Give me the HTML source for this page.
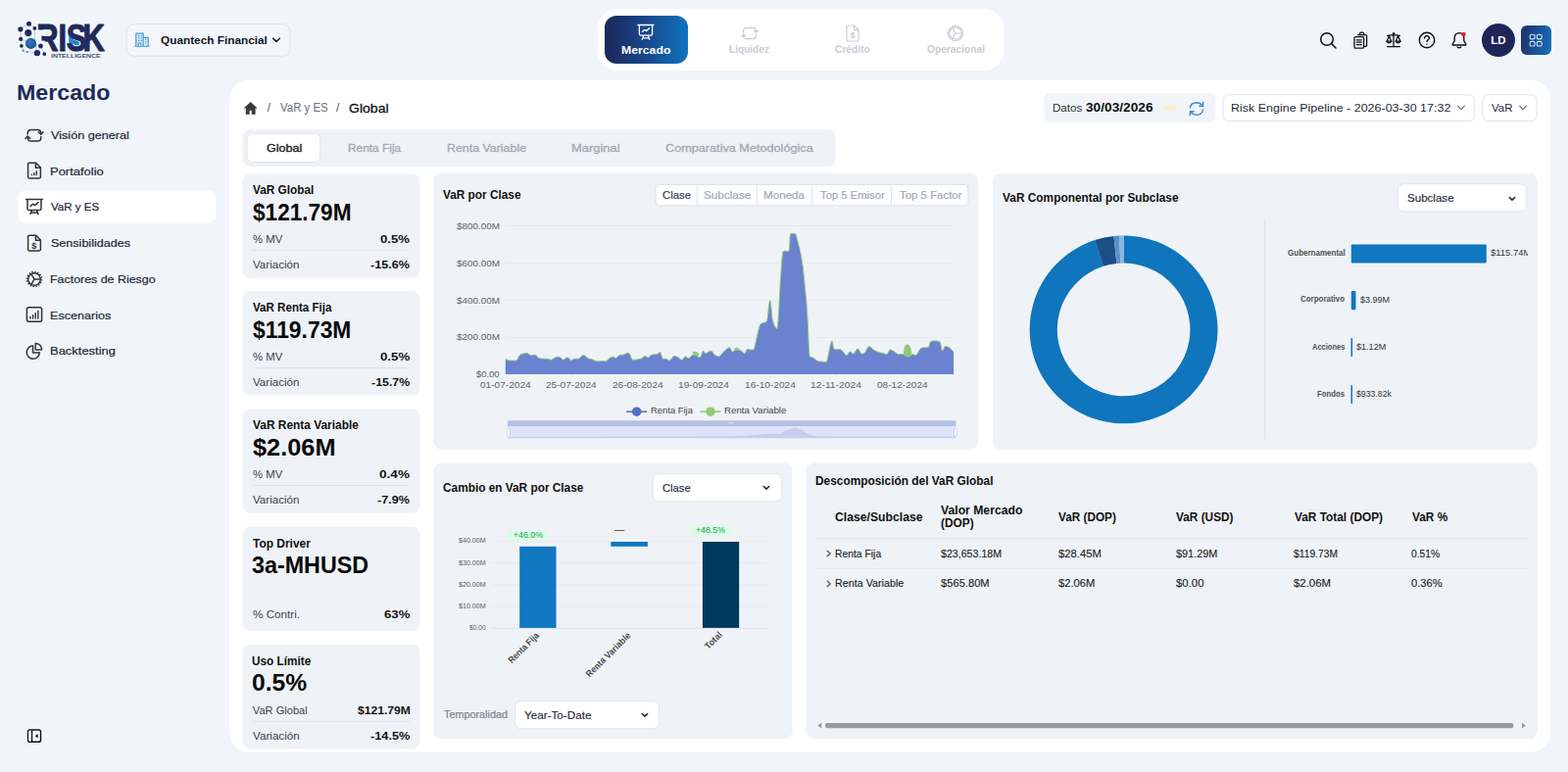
<!DOCTYPE html>
<html lang="es">
<head>
<meta charset="utf-8">
<title>Risk Intelligence - Mercado - VaR y ES</title>
<style>
*{box-sizing:border-box;margin:0;padding:0}
html,body{width:1600px;height:788px;overflow:hidden}
body{background:#f1f5f9;font-family:"Liberation Sans",sans-serif;color:#0f172a;position:relative}
.a{position:absolute}
.t{position:absolute;white-space:nowrap;line-height:1}
svg{position:absolute;overflow:visible}
.card{position:absolute;background:#eff2f7;border-radius:8px}
.sel{position:absolute;background:#fff;border:1px solid #eef0f4;border-radius:6px;box-shadow:0 1px 1.5px rgba(16,24,40,.06)}
.ico{fill:none;stroke:#333;stroke-width:1.5;stroke-linecap:round;stroke-linejoin:round}
.kd{position:absolute;height:1px;background:#e1e5eb}
</style>
</head>
<body>
<svg class="a" style="left:16px;top:19px" width="94" height="42" viewBox="16 19 94 42">
  <defs>
    <radialGradient id="lg1" cx="40%" cy="35%" r="75%"><stop offset="0" stop-color="#3577bd"/><stop offset="1" stop-color="#1d4c90"/></radialGradient>
  </defs>
  <text y="51.8" font-family="Liberation Sans, sans-serif" font-weight="700" font-size="39.6" fill="#1f2a5c" stroke="#1f2a5c" stroke-width="1.1" stroke-linejoin="round" transform="scale(0.78,1)" x="47.8 76.3 86.8 108.3">RISK</text>
  <path d="M36.5 30.6 H45 V36.6 H42.4 V41.4 H45.6 V54 H36.5 Z" fill="#f1f5f9"/>
  <path d="M70.2 35.2 Q72.6 40.2 77.4 41.2 Q81.8 42.2 81.2 45 Q79.8 47.2 76.2 45.8 Q74.2 43.8 70.2 44.4 Z" fill="#2487c8"/>
  <g stroke="#8a99c4" stroke-width=".5" fill="none">
    <path d="M20.9 29.8 L29.5 24.2 L35.4 28.9 L35.4 42 L37.9 54.1 L23.6 51.8 L21.2 39.9 Z"/>
    <path d="M28.8 33.5 L31.5 44.4 L41.5 47 L45.3 55.1 M21.2 39.9 L31.5 44.4 M41.5 47 L37.9 54.1"/>
  </g>
  <g fill="#1f2a5c">
    <circle cx="29.5" cy="24.2" r="2.5"/>
    <circle cx="20.9" cy="29.8" r="2.6"/>
    <circle cx="35.4" cy="28.9" r="1.9"/>
    <circle cx="28.8" cy="33.5" r="3.5"/>
    <circle cx="21.2" cy="39.9" r="2.1"/>
    <circle cx="21.9" cy="46.8" r="1.9"/>
    <circle cx="41.5" cy="47" r="2.4"/>
    <circle cx="37.9" cy="54.1" r="3.2"/>
    <circle cx="45.3" cy="55.1" r="1.9"/>
  </g>
  <circle cx="23.6" cy="51.8" r="1.1" fill="#4a8fd0"/>
  <circle cx="27.6" cy="53.1" r="1.1" fill="#4a8fd0"/>
  <circle cx="31.5" cy="44.4" r="5.6" fill="url(#lg1)"/>
  <text x="52" y="58.7" font-family="Liberation Sans, sans-serif" font-weight="700" font-size="4.6" fill="#4a5376" textLength="50.6" lengthAdjust="spacingAndGlyphs">INTELLIGENCE</text>
</svg>
<svg style="left:126px;top:22px" width="173" height="38" viewBox="126 22 173 38"><rect x="129.1" y="24.6" width="166.8" height="32.6" rx="7.5" fill="#f3f6fa" stroke="#dfe4ea" stroke-width="1"/></svg>
<svg style="left:135.5px;top:32px" width="18" height="18" viewBox="0 0 18 18">
  <path d="M1.5 15.2 H16.5" stroke="#4b9bd6" stroke-width="1.2" fill="none"/>
  <path d="M2.8 15 V2.2 H10.2 V15" stroke="#4b9bd6" stroke-width="1.2" fill="#d7e9f8"/>
  <path d="M10.2 6.3 H15.2 V15" stroke="#4b9bd6" stroke-width="1.2" fill="#d7e9f8"/>
  <path d="M5 4.6h1.2M7.6 4.6h1.2M5 7h1.2M7.6 7h1.2M5 9.4h1.2M7.6 9.4h1.2M12.2 8.5h1M12.2 10.8h1M12.2 13h1" stroke="#3b8fd0" stroke-width="1.2" fill="none"/>
  <path d="M5.2 15 V12.4 Q6.5 11 7.8 12.4 V15" stroke="#3b8fd0" stroke-width="1.1" fill="#fff"/>
</svg>
<div class="t" style="left:163.59px;top:36px;font-size:11.5px;color:#111827;font-weight:700;transform:scaleX(1.0263);transform-origin:0 0;">Quantech Financial</div>
<svg style="left:277px;top:36px" width="10" height="10" viewBox="0 0 10 10"><path d="M1.6 3.2 L5 6.4 L8.4 3.2" fill="none" stroke="#111" stroke-width="1.5" stroke-linecap="round" stroke-linejoin="round"/></svg>
<svg style="left:608px;top:7px" width="419" height="67" viewBox="608 7 419 67"><rect x="610" y="9" width="414.3" height="63" rx="20" fill="#fff"/></svg>
<div class="a" style="left:616.7px;top:16px;width:85.2px;height:48.8px;background:linear-gradient(90deg,#1d2759 0%,#18488c 50%,#1074be 100%);border-radius:12px;"></div>
<svg style="left:650.3px;top:23.5px" width="18" height="18" viewBox="0 0 18 18" fill="none" stroke="#fff" stroke-width="1.3" stroke-linecap="round" stroke-linejoin="round">
  <path d="M1 1.5 H17"/><path d="M2.4 1.8 V10.6 Q2.4 12.2 4 12.2 H14 Q15.6 12.2 15.6 10.6 V1.8"/>
  <path d="M5.2 16.4 L6.6 12.6 M12.8 16.4 L11.4 12.6 M5.8 14.8 H12.2"/>
  <path d="M5.6 8.3 L7.8 6.3 L9.6 7.6 L12.6 4.8"/>
</svg>
<div class="t" style="left:634.22px;top:46px;font-size:11.8px;color:#fff;font-weight:700;transform:scaleX(1.0392);transform-origin:0 0;">Mercado</div>
<svg style="left:755.7px;top:25px" width="18" height="18" viewBox="0 0 18 18" fill="none" stroke="#c9cdd4" stroke-width="1.3" stroke-linecap="round" stroke-linejoin="round">
  <path d="M2.6 8.2 V6.6 Q2.6 3.4 5.8 3.4 H12.2 Q15.4 3.4 15.4 6.6 V7.6"/><path d="M13.4 6.2 L15.4 8 L17.2 6.2"/>
  <path d="M15.4 10.2 V11.4 Q15.4 14.6 12.2 14.6 H5.8 Q2.6 14.6 2.6 11.4 V10.6"/><path d="M.8 12 L2.6 10.2 L4.6 12"/>
</svg>
<div class="t" style="left:743.88px;top:45px;font-size:10.5px;color:#c9cdd4;font-weight:700;transform:scaleX(0.9614);transform-origin:0 0;">Liquidez</div>
<svg style="left:860.7px;top:25px" width="18" height="18" viewBox="0 0 18 18" fill="none" stroke="#c9cdd4" stroke-width="1.2" stroke-linecap="round" stroke-linejoin="round">
  <path d="M3 2.2 Q3 1 4.2 1 H10.6 L15 5.4 V15.8 Q15 17 13.8 17 H4.2 Q3 17 3 15.8 Z"/><path d="M10.4 1.2 V5.6 H14.8"/>
  <text x="9" y="14.2" text-anchor="middle" font-family="Liberation Sans, sans-serif" font-weight="700" font-size="8.5" fill="#c9cdd4" stroke="none">$</text>
</svg>
<div class="t" style="left:852.31px;top:45px;font-size:10.5px;color:#c9cdd4;font-weight:700;transform:scaleX(0.9734);transform-origin:0 0;">Crédito</div>
<svg style="left:966px;top:25px" width="18" height="18" viewBox="0 0 18 18" fill="none" stroke="#c9cdd4" stroke-width="1.2" stroke-linecap="round" stroke-linejoin="round">
  <circle cx="9" cy="9" r="6.2"/><circle cx="9" cy="9" r="7.6" stroke-dasharray="1.3 1.6" stroke-width="1.4"/>
  <path d="M9 9 L14.8 9 M9 9 L6 3.8 M9 9 L6 14.2"/>
</svg>
<div class="t" style="left:946.11px;top:45px;font-size:10.5px;color:#c9cdd4;font-weight:700;transform:scaleX(0.9731);transform-origin:0 0;">Operacional</div>
<svg style="left:1345px;top:31px" width="20" height="20" viewBox="0 0 20 20" fill="none" stroke="#111" stroke-width="1.5" stroke-linecap="round"><circle cx="9" cy="9" r="6.3"/><path d="M13.8 13.8 L18 18"/></svg>
<svg style="left:1379px;top:31px" width="20" height="20" viewBox="0 0 20 20" fill="none" stroke="#111" stroke-width="1.3" stroke-linejoin="round" stroke-linecap="round">
  <path d="M6.5 4.6 H14.4 Q15.6 4.6 15.6 5.8 V15.2 Q15.6 16.4 14.4 16.4 H13.2"/>
  <path d="M8.6 4.4 V3.2 Q8.6 2.2 9.6 2.2 H11.6 Q12.6 2.2 12.6 3.2 V4.4"/>
  <rect x="3" y="6.6" width="9.6" height="11.6" rx="1.2"/>
  <path d="M5.2 9.8 H10.4 M5.2 12.2 H10.4 M5.2 14.6 H10.4"/>
</svg>
<svg style="left:1412px;top:31px" width="20" height="20" viewBox="0 0 20 20" fill="none" stroke="#111" stroke-width="1.3" stroke-linejoin="round" stroke-linecap="round">
  <path d="M10 4.4 V16.2 M3.6 16.6 H16.4 M3.6 5.4 Q6.6 4.6 10 5 Q13.4 4.6 16.4 5.4"/>
  <circle cx="10" cy="3.4" r="1" fill="#111" stroke-width=".8"/>
  <path d="M5.4 5.6 L3.2 11 M5.4 5.6 L7.6 11 M14.6 5.6 L12.4 11 M14.6 5.6 L16.8 11"/>
  <path d="M2.8 11.2 H8 Q5.4 14.4 2.8 11.2 Z M12 11.2 H17.2 Q14.6 14.4 12 11.2 Z"/>
</svg>
<svg style="left:1445.5px;top:31px" width="20" height="20" viewBox="0 0 20 20" fill="none" stroke="#111" stroke-width="1.4" stroke-linecap="round"><circle cx="10" cy="10" r="7.7"/>
  <path d="M7.6 8 Q7.6 5.6 10 5.6 Q12.4 5.6 12.4 7.8 Q12.4 9.2 10.8 10 Q10 10.6 10 11.6"/><circle cx="10" cy="14.2" r=".7" fill="#111" stroke="none"/></svg>
<svg style="left:1479px;top:31px" width="20" height="20" viewBox="0 0 20 20" fill="none" stroke="#111" stroke-width="1.4" stroke-linecap="round" stroke-linejoin="round">
  <path d="M10 2.6 Q5.4 2.8 5.2 7.6 V10.6 L3.2 14 Q2.8 15 4 15 H16 Q17.2 15 16.8 14 L14.8 10.6 V7.6 Q14.6 2.8 10 2.6 Z"/>
  <path d="M8.2 17 Q10 18.6 11.8 17"/>
  <circle cx="14.4" cy="4" r="2.3" fill="#f01d2a" stroke="none"/>
</svg>
<svg style="left:1510px;top:22px" width="38" height="38" viewBox="1510 22 38 38"><rect x="1512" y="24" width="34" height="34" rx="17" fill="#1e2557"/></svg>
<div class="t" style="left:1521.25px;top:36px;font-size:11.5px;color:#fff;font-weight:700;">LD</div>
<div class="a" style="left:1552px;top:26px;width:30.5px;height:30px;background:linear-gradient(100deg,#1d3572 10%,#1670bc 100%);border-radius:6px;"></div>
<svg style="left:1559.2px;top:33px" width="16" height="16" viewBox="0 0 16 16" fill="none" stroke="#cfe3f6" stroke-width="1.1"><rect x="2.2" y="2.3" width="4.9" height="4.6" rx="1.3"/><rect x="9.3" y="2.3" width="4.9" height="4.6" rx="1.3"/><rect x="2.2" y="9.4" width="4.9" height="4.6" rx="1.3"/><rect x="9.3" y="9.4" width="4.9" height="4.6" rx="1.3"/></svg>
<div class="t" style="left:17.46px;top:84px;font-size:22.6px;color:#1e2a5a;font-weight:700;transform:scaleX(1.0276);transform-origin:0 0;">Mercado</div>
<svg style="left:16px;top:192px" width="207" height="38" viewBox="16 192 207 38"><rect x="18.5" y="194.5" width="202" height="33" rx="8" fill="#fff"/></svg>
<div class="t" style="left:52.31px;top:132px;font-size:11.7px;color:#1e293b;-webkit-text-stroke:0.22px #1e293b;transform:scaleX(1.0819);transform-origin:0 0;">Visión general</div>
<div class="t" style="left:51.20px;top:169px;font-size:11.7px;color:#1e293b;-webkit-text-stroke:0.22px #1e293b;transform:scaleX(1.1100);transform-origin:0 0;">Portafolio</div>
<div class="t" style="left:52.31px;top:205px;font-size:11.7px;color:#1e293b;-webkit-text-stroke:0.22px #1e293b;transform:scaleX(0.9884);transform-origin:0 0;">VaR y ES</div>
<div class="t" style="left:51.77px;top:242px;font-size:11.7px;color:#1e293b;-webkit-text-stroke:0.22px #1e293b;transform:scaleX(1.0736);transform-origin:0 0;">Sensibilidades</div>
<div class="t" style="left:51.25px;top:279px;font-size:11.7px;color:#1e293b;-webkit-text-stroke:0.22px #1e293b;transform:scaleX(1.0615);transform-origin:0 0;">Factores de Riesgo</div>
<div class="t" style="left:51.23px;top:316px;font-size:11.7px;color:#1e293b;-webkit-text-stroke:0.22px #1e293b;transform:scaleX(1.0775);transform-origin:0 0;">Escenarios</div>
<div class="t" style="left:51.20px;top:352px;font-size:11.7px;color:#1e293b;-webkit-text-stroke:0.22px #1e293b;transform:scaleX(1.1077);transform-origin:0 0;">Backtesting</div>
<svg style="left:25px;top:127.5px" width="20" height="20" viewBox="0 0 20 20" class="ico">
  <path d="M3.2 9 V8 Q3.2 4.4 6.8 4.4 H13.2 Q16.8 4.4 16.8 8 V8.6"/><path d="M14.4 6.8 L16.8 9.2 L19 6.8"/>
  <path d="M16.8 11.6 V12.4 Q16.8 16 13.2 16 H6.8 Q3.2 16 3.2 12.4 V11.8"/><path d="M1 13.4 L3.2 11 L5.6 13.4"/>
</svg>
<svg style="left:25px;top:164.4px" width="20" height="20" viewBox="0 0 20 20" class="ico">
  <path d="M3.6 3.6 Q3.6 2.2 5 2.2 H11.6 L16.4 7 V16.6 Q16.4 18 15 18 H5 Q3.6 18 3.6 16.6 Z"/><path d="M11.4 2.6 V7.2 H16"/>
  <path d="M7.4 14.6 V14.2 M9.8 14.6 V12.8 M12.2 14.6 V11" stroke-width="1.4"/>
</svg>
<svg style="left:25px;top:201.2px" width="20" height="20" viewBox="0 0 20 20" class="ico">
  <path d="M1.6 2.6 H18.4"/><path d="M3 3 V12 Q3 13.4 4.4 13.4 H15.6 Q17 13.4 17 12 V3"/>
  <path d="M6 17.6 L7.4 13.8 M14 17.6 L12.6 13.8 M6.6 16 H13.4"/>
  <path d="M6.2 9.4 L8.6 7.2 L10.6 8.6 L13.8 5.6"/>
</svg>
<svg style="left:25px;top:238px" width="20" height="20" viewBox="0 0 20 20" class="ico">
  <path d="M3.6 3.6 Q3.6 2.2 5 2.2 H11.6 L16.4 7 V16.6 Q16.4 18 15 18 H5 Q3.6 18 3.6 16.6 Z"/><path d="M11.4 2.6 V7.2 H16"/>
  <text x="9.8" y="15.6" text-anchor="middle" font-family="Liberation Sans, sans-serif" font-weight="700" font-size="9" fill="#333" stroke="none">$</text>
</svg>
<svg style="left:25px;top:274.5px" width="20" height="20" viewBox="0 0 20 20" class="ico">
  <circle cx="10" cy="10" r="6.3"/><circle cx="10" cy="10" r="7.5" stroke-dasharray="1.4 1.545" stroke-width="1.5" stroke-linecap="butt"/>
  <path d="M10 10 H16.2 M10 10 L6.9 4.6 M10 10 L6.9 15.4"/>
</svg>
<svg style="left:25px;top:311.3px" width="20" height="20" viewBox="0 0 20 20" class="ico">
  <rect x="2.4" y="2.8" width="15.2" height="14.4" rx="2"/>
  <path d="M6 14 V12.4 M8.6 14 V10.6 M11.2 14 V8.6 M13.8 14 V6.4" stroke-width="1.4"/>
</svg>
<svg style="left:25px;top:348px" width="20" height="20" viewBox="0 0 20 20" class="ico">
  <path d="M8.6 5 A6.6 6.6 0 1 0 15.4 12 H8.6 Z"/>
  <path d="M11.2 2.4 A6.4 6.4 0 0 1 17.6 9 H11.2 Z"/>
</svg>
<svg style="left:0;top:0" width="60" height="788" viewBox="0 0 60 788">
  <rect x="28.6" y="745" width="12.9" height="12.2" rx="1.8" fill="#fff" stroke="#111" stroke-width="1.5"/>
  <rect x="29.3" y="745.8" width="3" height="10.6" fill="#f1f5f9"/>
  <path d="M32.6 745 V757.2" stroke="#111" stroke-width="1.3"/>
  <path d="M35.9 751.2 L38.7 749 V753.4 Z" fill="#111"/>
</svg>
<svg style="left:232px;top:79px" width="1352" height="691" viewBox="232 79 1352 691"><rect x="234" y="81.5" width="1348" height="686.3" rx="20" fill="#fff"/></svg>
<svg style="left:248.1px;top:102.7px" width="15.4" height="15" viewBox="0 0 17 16"><path d="M8.5 1.2 L1.4 7.8 H3.4 V14.6 H7 V10.2 H10 V14.6 H13.6 V7.8 H15.6 Z" fill="#3a3a3a" stroke="#3a3a3a" stroke-width=".6" stroke-linejoin="round"/></svg>
<div class="t" style="left:272.80px;top:104px;font-size:12px;color:#555;">/</div>
<div class="t" style="left:285.60px;top:104px;font-size:12px;color:#6b7280;transform:scaleX(0.9525);transform-origin:0 0;">VaR y ES</div>
<div class="t" style="left:342.90px;top:104px;font-size:12px;color:#555;">/</div>
<div class="t" style="left:355.68px;top:104px;font-size:13.6px;color:#111;-webkit-text-stroke:0.3px #111;transform:scaleX(1.0320);transform-origin:0 0;">Global</div>
<svg style="left:1063px;top:93px" width="180" height="34" viewBox="1063 93 180 34"><rect x="1065.4" y="95.2" width="175.1" height="29.7" rx="6" fill="#f1f5f9"/></svg>
<div class="t" style="left:1074.49px;top:105px;font-size:11.5px;color:#333;transform:scaleX(1.0052);transform-origin:0 0;">Datos</div>
<div class="t" style="left:1108.11px;top:104px;font-size:12px;color:#111;font-weight:700;transform:scaleX(1.1412);transform-origin:0 0;">30/03/2026</div>
<svg style="left:1186px;top:106px" width="17" height="9" viewBox="1186 106 17 9"><rect x="1188" y="108" width="12.3" height="4.8" rx="2.4" fill="#fdf0c4"/></svg>
<svg style="left:1211.5px;top:101.5px" width="18" height="18" viewBox="0 0 18 18" fill="none" stroke="#3b8fd9" stroke-width="1.5" stroke-linecap="round" stroke-linejoin="round">
  <path d="M2.4 8 Q3.2 3 9 2.8 Q12.6 2.8 15.2 6"/><path d="M15.6 2.4 V6.2 H11.8"/>
  <path d="M15.6 10 Q14.8 15 9 15.2 Q5.4 15.2 2.8 12"/><path d="M2.4 15.6 V11.8 H6.2"/>
</svg>
<svg style="left:1245px;top:94px" width="263" height="32" viewBox="1245 94 263 32"><rect x="1247.9" y="96.8" width="256.8" height="26.7" rx="5.5" fill="#fff" stroke="#dfe3e9" stroke-width="1"/></svg>
<div class="t" style="left:1255.54px;top:105px;font-size:11.8px;color:#1f2937;transform:scaleX(1.0592);transform-origin:0 0;">Risk Engine Pipeline - 2026-03-30 17:32</div>
<svg style="left:1485.6px;top:105.3px" width="10" height="10" viewBox="0 0 10 10"><path d="M1.6 3.2 L5 6.6 L8.4 3.2" fill="none" stroke="#666" stroke-width="1.1" stroke-linecap="round" stroke-linejoin="round"/></svg>
<svg style="left:1510px;top:94px" width="61" height="32" viewBox="1510 94 61 32"><rect x="1512.9" y="96.8" width="55.2" height="26.7" rx="5.5" fill="#fff" stroke="#dfe3e9" stroke-width="1"/></svg>
<div class="t" style="left:1521.86px;top:105px;font-size:11.8px;color:#1f2937;transform:scaleX(0.9741);transform-origin:0 0;">VaR</div>
<svg style="left:1549.2px;top:105.3px" width="10" height="10" viewBox="0 0 10 10"><path d="M1.6 3.2 L5 6.6 L8.4 3.2" fill="none" stroke="#666" stroke-width="1.1" stroke-linecap="round" stroke-linejoin="round"/></svg>
<svg style="left:245px;top:130px" width="610" height="42" viewBox="245 130 610 42"><rect x="247.6" y="132.2" width="605.2" height="37.8" rx="8" fill="#eff2f7"/></svg>
<svg style="left:249px;top:133px" width="81" height="35" viewBox="249 133 81 35"><rect x="252" y="136.2" width="74.8" height="29.3" rx="5.5" fill="#fff" stroke="#e0e3e9" stroke-width="1"/></svg>
<div class="t" style="left:271.52px;top:146px;font-size:11.3px;color:#222;-webkit-text-stroke:0.35px #222;transform:scaleX(1.1127);transform-origin:0 0;">Global</div>
<div class="t" style="left:354.70px;top:146px;font-size:11.3px;color:#a2a8b5;-webkit-text-stroke:0.3px #a2a8b5;transform:scaleX(1.0515);transform-origin:0 0;">Renta Fija</div>
<div class="t" style="left:455.55px;top:146px;font-size:11.3px;color:#a2a8b5;-webkit-text-stroke:0.3px #a2a8b5;transform:scaleX(1.0966);transform-origin:0 0;">Renta Variable</div>
<div class="t" style="left:583.11px;top:146px;font-size:11.3px;color:#a2a8b5;-webkit-text-stroke:0.3px #a2a8b5;transform:scaleX(1.1446);transform-origin:0 0;">Marginal</div>
<div class="t" style="left:678.69px;top:146px;font-size:11.3px;color:#a2a8b5;-webkit-text-stroke:0.3px #a2a8b5;transform:scaleX(1.1216);transform-origin:0 0;">Comparativa Metodológica</div>
<svg style="left:245px;top:175px" width="186" height="111" viewBox="245 175 186 111"><rect x="247.4" y="177.2" width="181.1" height="106.4" rx="8" fill="#eff2f7"/></svg>
<div class="t" style="left:257.66px;top:188px;font-size:12.2px;color:#111;font-weight:700;transform:scaleX(0.9692);transform-origin:0 0;">VaR Global</div>
<div class="t" style="left:257.65px;top:206px;font-size:23px;color:#0a0a0a;font-weight:700;transform:scaleX(0.9821);transform-origin:0 0;">$121.79M</div>
<div class="t" style="left:257.59px;top:239px;font-size:11.1px;color:#3a4150;transform:scaleX(1.0207);transform-origin:0 0;">% MV</div>
<div class="t" style="left:388.03px;top:238px;font-size:11.6px;color:#111;font-weight:700;transform:scaleX(1.1379);transform-origin:0 0;">0.5%</div>
<div class="t" style="left:257.84px;top:265px;font-size:11.1px;color:#3a4150;transform:scaleX(1.0427);transform-origin:0 0;">Variación</div>
<div class="t" style="left:378.26px;top:264px;font-size:11.6px;color:#111;font-weight:700;transform:scaleX(1.0861);transform-origin:0 0;">-15.6%</div>
<div class="kd" style="left:257.5px;top:254.8px;width:160.5px"></div>
<svg style="left:245px;top:295px" width="186" height="111" viewBox="245 295 186 111"><rect x="247.4" y="297.3" width="181.1" height="106.4" rx="8" fill="#eff2f7"/></svg>
<div class="t" style="left:257.66px;top:308px;font-size:12.2px;color:#111;font-weight:700;transform:scaleX(0.9503);transform-origin:0 0;">VaR Renta Fija</div>
<div class="t" style="left:257.65px;top:326px;font-size:23px;color:#0a0a0a;font-weight:700;transform:scaleX(0.9935);transform-origin:0 0;">$119.73M</div>
<div class="t" style="left:257.59px;top:359px;font-size:11.1px;color:#3a4150;transform:scaleX(1.0207);transform-origin:0 0;">% MV</div>
<div class="t" style="left:387.93px;top:358px;font-size:11.6px;color:#111;font-weight:700;transform:scaleX(1.1417);transform-origin:0 0;">0.5%</div>
<div class="t" style="left:257.84px;top:385px;font-size:11.1px;color:#3a4150;transform:scaleX(1.0427);transform-origin:0 0;">Variación</div>
<div class="t" style="left:378.87px;top:384px;font-size:11.6px;color:#111;font-weight:700;transform:scaleX(1.0694);transform-origin:0 0;">-15.7%</div>
<div class="kd" style="left:257.5px;top:374.9px;width:160.5px"></div>
<svg style="left:245px;top:415px" width="186" height="111" viewBox="245 415 186 111"><rect x="247.4" y="417.3" width="181.1" height="106.4" rx="8" fill="#eff2f7"/></svg>
<div class="t" style="left:257.66px;top:428px;font-size:12.2px;color:#111;font-weight:700;transform:scaleX(0.9768);transform-origin:0 0;">VaR Renta Variable</div>
<div class="t" style="left:257.62px;top:446px;font-size:23px;color:#0a0a0a;font-weight:700;transform:scaleX(1.1013);transform-origin:0 0;">$2.06M</div>
<div class="t" style="left:257.59px;top:479px;font-size:11.1px;color:#3a4150;transform:scaleX(1.0207);transform-origin:0 0;">% MV</div>
<div class="t" style="left:387.11px;top:478px;font-size:11.6px;color:#111;font-weight:700;transform:scaleX(1.1728);transform-origin:0 0;">0.4%</div>
<div class="t" style="left:257.84px;top:505px;font-size:11.1px;color:#3a4150;transform:scaleX(1.0427);transform-origin:0 0;">Variación</div>
<div class="t" style="left:385.36px;top:504px;font-size:11.6px;color:#111;font-weight:700;transform:scaleX(1.0847);transform-origin:0 0;">-7.9%</div>
<div class="kd" style="left:257.5px;top:494.9px;width:160.5px"></div>
<svg style="left:245px;top:535px" width="186" height="111" viewBox="245 535 186 111"><rect x="247.4" y="537.6" width="181.1" height="106.4" rx="8" fill="#eff2f7"/></svg>
<div class="t" style="left:257.65px;top:549px;font-size:12.2px;color:#111;font-weight:700;transform:scaleX(0.9808);transform-origin:0 0;">Top Driver</div>
<div class="t" style="left:257.39px;top:566px;font-size:23px;color:#0a0a0a;font-weight:700;transform:scaleX(1.0138);transform-origin:0 0;">3a-MHUSD</div>
<div class="t" style="left:257.57px;top:622px;font-size:11.1px;color:#3a4150;transform:scaleX(1.0531);transform-origin:0 0;">% Contri.</div>
<div class="t" style="left:391.73px;top:621px;font-size:11.6px;color:#111;font-weight:700;transform:scaleX(1.1378);transform-origin:0 0;">63%</div>
<svg style="left:245px;top:655px" width="186" height="112" viewBox="245 655 186 112"><rect x="247.4" y="657.9" width="181.1" height="106.4" rx="8" fill="#eff2f7"/></svg>
<div class="t" style="left:257.17px;top:669px;font-size:12.2px;color:#111;font-weight:700;transform:scaleX(0.9672);transform-origin:0 0;">Uso Límite</div>
<div class="t" style="left:256.83px;top:686px;font-size:23px;color:#0a0a0a;font-weight:700;transform:scaleX(1.0719);transform-origin:0 0;">0.5%</div>
<div class="t" style="left:257.85px;top:720px;font-size:11.1px;color:#3a4150;">VaR Global</div>
<div class="t" style="left:364.94px;top:719px;font-size:11.6px;color:#111;font-weight:700;transform:scaleX(1.0436);transform-origin:0 0;">$121.79M</div>
<div class="t" style="left:257.84px;top:746px;font-size:11.1px;color:#3a4150;transform:scaleX(1.0517);transform-origin:0 0;">Variación</div>
<div class="t" style="left:377.75px;top:745px;font-size:11.6px;color:#111;font-weight:700;transform:scaleX(1.1000);transform-origin:0 0;">-14.5%</div>
<div class="kd" style="left:257.5px;top:735.5px;width:160.5px"></div>
<svg style="left:440px;top:175px" width="561" height="286" viewBox="440 175 561 286"><rect x="442.4" y="177.1" width="556" height="281.6" rx="8" fill="#eff2f7"/></svg>
<svg style="left:1010px;top:175px" width="561" height="286" viewBox="1010 175 561 286"><rect x="1012.8" y="177.1" width="556" height="281.6" rx="8" fill="#eff2f7"/></svg>
<svg style="left:440px;top:470px" width="371" height="287" viewBox="440 470 371 287"><rect x="442.4" y="472.8" width="366.3" height="281.4" rx="8" fill="#eff2f7"/></svg>
<svg style="left:820px;top:470px" width="751" height="287" viewBox="820 470 751 287"><rect x="822.3" y="472.8" width="746.5" height="281.4" rx="8" fill="#eff2f7"/></svg>
<div class="t" style="left:452.36px;top:193px;font-size:12.2px;color:#111;font-weight:700;transform:scaleX(0.9698);transform-origin:0 0;">VaR por Clase</div>
<svg style="left:666px;top:185px" width="325" height="28" viewBox="666 185 325 28"><rect x="669.1" y="188.4" width="318.7" height="21.4" rx="3.5" fill="#fff" stroke="#dde0e6" stroke-width="1"/></svg>
<svg style="left:708px;top:186px" width="6" height="26" viewBox="708 186 6 26"><rect x="710.8" y="188.5" width="1" height="21.2" rx="0" fill="#e2e5ea"/></svg>
<svg style="left:770px;top:186px" width="5" height="26" viewBox="770 186 5 26"><rect x="772" y="188.5" width="1" height="21.2" rx="0" fill="#e2e5ea"/></svg>
<svg style="left:826px;top:186px" width="5" height="26" viewBox="826 186 5 26"><rect x="828" y="188.5" width="1" height="21.2" rx="0" fill="#e2e5ea"/></svg>
<svg style="left:906px;top:186px" width="6" height="26" viewBox="906 186 6 26"><rect x="908.9" y="188.5" width="1" height="21.2" rx="0" fill="#e2e5ea"/></svg>
<div class="t" style="left:675.51px;top:194px;font-size:11.5px;color:#334155;-webkit-text-stroke:0.2px #334155;transform:scaleX(0.9895);transform-origin:0 0;">Clase</div>
<div class="t" style="left:717.79px;top:194px;font-size:11.5px;color:#a2a8b5;-webkit-text-stroke:0.2px #a2a8b5;transform:scaleX(1.0205);transform-origin:0 0;">Subclase</div>
<div class="t" style="left:779.49px;top:194px;font-size:11.5px;color:#a2a8b5;-webkit-text-stroke:0.2px #a2a8b5;transform:scaleX(1.0099);transform-origin:0 0;">Moneda</div>
<div class="t" style="left:836.76px;top:194px;font-size:11.5px;color:#a2a8b5;-webkit-text-stroke:0.2px #a2a8b5;transform:scaleX(0.9783);transform-origin:0 0;">Top 5 Emisor</div>
<div class="t" style="left:917.65px;top:194px;font-size:11.5px;color:#a2a8b5;-webkit-text-stroke:0.2px #a2a8b5;transform:scaleX(0.9937);transform-origin:0 0;">Top 5 Factor</div>
<svg class="a" style="left:0;top:0" width="1600" height="788" viewBox="0 0 1600 788">
  <g stroke="#e8ebf0" stroke-width="1">
    <path d="M516 230.5 H973 M516 268.5 H973 M516 306.5 H973 M516 344.5 H973"/>
  </g>
  <path d="M583.5 382 V385 M650.5 382 V385 M718.5 382 V385 M786 382 V385 M853.5 382 V385 M921 382 V385" stroke="#dfe3ea" stroke-width="1"/>
  <path d="M515.8,366.6 C516.6,366.9 517.7,367.7 519.9,368.0 C522.1,368.0 524.7,368.0 526.8,368.0 C528.8,366.9 528.8,364.1 530.2,362.7 C531.6,361.4 532.0,361.6 533.6,361.1 C535.2,360.7 536.6,360.5 538.2,360.5 C539.8,360.8 540.0,362.4 541.6,362.7 C543.2,362.7 544.6,362.1 546.2,362.1 C547.8,362.6 548.0,364.7 549.6,365.5 C551.2,366.2 552.4,366.0 554.2,366.2 C556.0,366.2 557.2,366.2 558.8,366.2 C560.4,366.4 560.4,367.3 562.2,367.3 C564.0,366.9 566.1,364.9 567.9,364.3 C569.7,364.3 570.0,364.3 571.3,364.6 C572.7,365.2 573.4,367.2 574.7,367.3 C576.1,367.3 577.0,365.3 578.2,365.0 C579.3,365.0 579.5,365.1 580.5,365.7 C581.4,366.3 581.6,367.9 582.7,368.0 C583.9,368.0 584.6,366.5 586.2,366.2 C587.8,366.2 589.1,366.2 590.7,366.2 C592.3,365.5 593.0,363.4 594.2,362.7 C595.3,362.7 595.3,362.7 596.4,362.7 C597.6,363.3 598.3,364.9 599.9,365.7 C601.5,366.5 602.6,366.2 604.4,366.9 C606.3,367.5 607.2,368.6 609.0,368.9 C610.8,368.9 611.7,368.5 613.6,368.5 C615.4,368.5 616.3,368.9 618.1,368.9 C620.0,368.2 621.1,365.9 622.7,365.0 C624.3,364.3 625.0,364.3 626.1,364.3 C627.3,364.5 627.3,365.7 628.4,365.7 C629.6,365.4 630.2,363.5 631.8,362.7 C633.4,362.1 634.8,362.6 636.4,362.1 C638.0,361.6 638.7,360.5 639.8,360.2 C641.0,360.2 641.0,360.2 642.1,360.7 C643.3,362.1 643.9,366.1 645.5,367.3 C647.1,367.3 648.3,367.2 650.1,366.9 C651.9,366.5 653.1,366.4 654.7,365.7 C656.3,365.0 656.7,363.6 658.1,363.4 C659.5,363.4 660.2,365.0 661.5,365.0 C662.9,364.8 663.1,362.7 665.0,362.1 C666.8,361.6 669.0,362.1 670.7,361.6 C672.4,361.1 672.3,359.3 673.4,359.3 C674.6,360.2 675.1,364.8 676.4,366.2 C677.7,366.2 678.4,366.2 679.8,366.2 C681.2,366.5 681.6,368.0 683.2,368.0 C684.8,367.4 686.2,364.2 687.8,363.4 C689.4,363.4 689.6,363.6 691.2,364.3 C692.8,365.1 694.2,367.3 695.8,367.3 C697.4,367.2 697.8,364.2 699.2,363.9 C700.6,363.9 701.3,365.7 702.6,365.7 C704.0,365.5 704.7,363.5 706.1,362.7 C707.4,362.1 707.9,362.1 709.5,362.1 C711.1,362.5 712.5,365.0 714.1,365.0 C715.7,364.2 716.3,359.1 717.5,358.2 C718.7,358.2 718.4,360.5 720.0,360.5 C721.6,360.5 723.9,358.2 725.7,358.2 C727.5,358.5 727.5,360.9 729.1,362.1 C730.7,363.2 731.9,363.9 733.7,363.9 C735.5,363.3 736.2,361.1 738.3,359.3 C740.3,357.5 742.2,354.8 744.0,354.7 C745.8,354.7 745.8,358.4 747.4,358.9 C749.0,358.9 750.1,357.2 752.0,357.0 C753.8,357.0 754.9,357.4 756.5,358.2 C758.1,359.0 758.8,361.1 760.0,361.1 C761.1,360.8 761.1,357.2 762.3,356.3 C763.4,356.3 764.3,356.9 765.7,357.0 C767.0,357.0 767.7,357.0 769.1,357.0 C770.5,354.3 771.2,348.6 772.5,343.3 C773.9,338.1 774.4,333.6 776.0,330.8 C777.6,329.2 779.2,329.9 780.5,329.2 C781.9,328.5 781.8,329.2 782.8,327.3 C783.9,322.9 784.6,306.8 785.8,306.8 C786.9,306.8 787.1,321.6 788.5,327.3 C790.0,333.1 791.5,335.3 793.1,335.3 C794.7,326.7 795.4,299.5 796.5,283.9 C797.7,268.4 797.9,263.3 798.8,257.7 C799.7,256.1 799.8,256.3 801.1,256.1 C802.3,256.1 803.8,256.5 805.0,256.5 C806.1,253.0 805.5,241.8 806.8,238.3 C808.1,238.3 810.0,238.3 811.4,238.7 C812.7,240.1 812.3,239.7 813.6,245.1 C815.0,250.5 816.6,255.6 818.2,265.7 C819.8,275.7 820.5,283.9 821.6,295.4 C822.8,306.8 823.0,309.1 823.9,322.8 C824.8,336.5 825.1,355.4 826.2,363.9 C827.3,365.0 828.0,364.1 829.6,365.0 C831.2,365.9 832.4,367.6 834.2,368.5 C836.0,369.1 836.9,368.9 838.8,369.1 C840.6,369.4 841.7,369.6 843.3,369.6 C844.9,366.7 845.6,359.1 846.8,354.7 C847.9,350.4 848.1,347.9 849.0,347.9 C850.0,348.3 849.7,354.8 851.3,356.6 C852.9,356.6 855.2,356.6 857.0,356.6 C858.9,357.1 859.1,358.1 860.5,359.3 C861.8,360.5 862.5,362.7 863.9,362.7 C865.3,362.6 865.9,359.2 867.3,358.9 C868.7,358.9 869.1,361.1 870.7,361.1 C872.3,360.5 873.7,355.9 875.3,355.9 C876.9,355.9 877.4,360.2 878.7,361.1 C880.1,361.1 880.6,361.1 882.2,360.5 C883.8,358.9 884.9,354.3 886.7,353.6 C888.5,353.6 889.5,355.9 891.3,357.0 C893.1,358.2 894.0,358.6 895.9,359.3 C897.7,360.0 898.6,360.0 900.4,360.5 C902.3,360.9 903.4,361.6 905.0,361.6 C906.6,360.9 906.8,357.5 908.4,357.0 C910.0,357.0 911.4,358.4 913.0,359.3 C914.6,360.2 914.8,361.1 916.4,361.6 C918.0,361.6 919.6,361.6 921.0,361.6 C922.3,361.6 921.7,361.6 923.3,361.6 C924.9,361.8 927.4,362.7 929.0,362.7 C930.6,362.7 930.1,361.6 931.3,361.6 C932.4,361.6 933.1,362.7 934.7,362.7 C936.3,361.6 937.7,357.5 939.2,355.9 C940.8,354.7 941.1,355.0 942.7,354.7 C944.3,354.7 945.9,354.7 947.2,354.7 C948.6,353.6 948.4,350.4 949.5,349.0 C950.7,347.9 951.1,348.0 953.0,347.9 C954.8,347.9 956.9,347.9 958.7,348.6 C960.4,350.6 960.5,357.2 961.6,358.2 C962.8,358.2 963.1,354.4 964.4,353.6 C965.6,353.6 966.1,353.6 967.8,354.3 C969.5,355.4 972.0,358.3 973.1,359.3 L973.1,382.0 L515.8,382.0 Z" fill="#6a82cf"/>
  <path d="M515.8,366.6 C516.6,366.9 517.7,367.7 519.9,368.0 C522.1,368.0 524.7,368.0 526.8,368.0 C528.8,366.9 528.8,364.1 530.2,362.7 C531.6,361.4 532.0,361.6 533.6,361.1 C535.2,360.7 536.6,360.5 538.2,360.5 C539.8,360.8 540.0,362.4 541.6,362.7 C543.2,362.7 544.6,362.1 546.2,362.1 C547.8,362.6 548.0,364.7 549.6,365.5 C551.2,366.2 552.4,366.0 554.2,366.2 C556.0,366.2 557.2,366.2 558.8,366.2 C560.4,366.4 560.4,367.3 562.2,367.3 C564.0,366.9 566.1,364.9 567.9,364.3 C569.7,364.3 570.0,364.3 571.3,364.6 C572.7,365.2 573.4,367.2 574.7,367.3 C576.1,367.3 577.0,365.3 578.2,365.0 C579.3,365.0 579.5,365.1 580.5,365.7 C581.4,366.3 581.6,367.9 582.7,368.0 C583.9,368.0 584.6,366.5 586.2,366.2 C587.8,366.2 589.1,366.2 590.7,366.2 C592.3,365.5 593.0,363.4 594.2,362.7 C595.3,362.7 595.3,362.7 596.4,362.7 C597.6,363.3 598.3,364.9 599.9,365.7 C601.5,366.5 602.6,366.2 604.4,366.9 C606.3,367.5 607.2,368.6 609.0,368.9 C610.8,368.9 611.7,368.5 613.6,368.5 C615.4,368.5 616.3,368.9 618.1,368.9 C620.0,368.2 621.1,365.9 622.7,365.0 C624.3,364.3 625.0,364.3 626.1,364.3 C627.3,364.5 627.3,365.7 628.4,365.7 C629.6,365.4 630.2,363.5 631.8,362.7 C633.4,362.1 634.8,362.6 636.4,362.1 C638.0,361.6 638.7,360.5 639.8,360.2 C641.0,360.2 641.0,360.2 642.1,360.7 C643.3,362.1 643.9,366.1 645.5,367.3 C647.1,367.3 648.3,367.2 650.1,366.9 C651.9,366.5 653.1,366.4 654.7,365.7 C656.3,365.0 656.7,363.6 658.1,363.4 C659.5,363.4 660.2,365.0 661.5,365.0 C662.9,364.8 663.1,362.7 665.0,362.1 C666.8,361.6 669.0,362.1 670.7,361.6 C672.4,361.1 672.3,359.3 673.4,359.3 C674.6,360.2 675.1,364.8 676.4,366.2 C677.7,366.2 678.4,366.2 679.8,366.2 C681.2,366.5 681.6,368.0 683.2,368.0 C684.8,367.4 686.2,364.2 687.8,363.4 C689.4,363.4 689.6,363.6 691.2,364.3 C692.8,365.1 694.2,367.3 695.8,367.3 C697.4,367.2 697.8,364.2 699.2,363.9 C700.6,363.9 701.3,365.7 702.6,365.7 C704.0,365.5 704.7,363.5 706.1,362.7 C707.4,362.1 707.9,362.1 709.5,362.1 C711.1,362.5 712.5,365.0 714.1,365.0 C715.7,364.2 716.3,359.1 717.5,358.2 C718.7,358.2 718.4,360.5 720.0,360.5 C721.6,360.5 723.9,358.2 725.7,358.2 C727.5,358.5 727.5,360.9 729.1,362.1 C730.7,363.2 731.9,363.9 733.7,363.9 C735.5,363.3 736.2,361.1 738.3,359.3 C740.3,357.5 742.2,354.8 744.0,354.7 C745.8,354.7 745.8,358.4 747.4,358.9 C749.0,358.9 750.1,357.2 752.0,357.0 C753.8,357.0 754.9,357.4 756.5,358.2 C758.1,359.0 758.8,361.1 760.0,361.1 C761.1,360.8 761.1,357.2 762.3,356.3 C763.4,356.3 764.3,356.9 765.7,357.0 C767.0,357.0 767.7,357.0 769.1,357.0 C770.5,354.3 771.2,348.6 772.5,343.3 C773.9,338.1 774.4,333.6 776.0,330.8 C777.6,329.2 779.2,329.9 780.5,329.2 C781.9,328.5 781.8,329.2 782.8,327.3 C783.9,322.9 784.6,306.8 785.8,306.8 C786.9,306.8 787.1,321.6 788.5,327.3 C790.0,333.1 791.5,335.3 793.1,335.3 C794.7,326.7 795.4,299.5 796.5,283.9 C797.7,268.4 797.9,263.3 798.8,257.7 C799.7,256.1 799.8,256.3 801.1,256.1 C802.3,256.1 803.8,256.5 805.0,256.5 C806.1,253.0 805.5,241.8 806.8,238.3 C808.1,238.3 810.0,238.3 811.4,238.7 C812.7,240.1 812.3,239.7 813.6,245.1 C815.0,250.5 816.6,255.6 818.2,265.7 C819.8,275.7 820.5,283.9 821.6,295.4 C822.8,306.8 823.0,309.1 823.9,322.8 C824.8,336.5 825.1,355.4 826.2,363.9 C827.3,365.0 828.0,364.1 829.6,365.0 C831.2,365.9 832.4,367.6 834.2,368.5 C836.0,369.1 836.9,368.9 838.8,369.1 C840.6,369.4 841.7,369.6 843.3,369.6 C844.9,366.7 845.6,359.1 846.8,354.7 C847.9,350.4 848.1,347.9 849.0,347.9 C850.0,348.3 849.7,354.8 851.3,356.6 C852.9,356.6 855.2,356.6 857.0,356.6 C858.9,357.1 859.1,358.1 860.5,359.3 C861.8,360.5 862.5,362.7 863.9,362.7 C865.3,362.6 865.9,359.2 867.3,358.9 C868.7,358.9 869.1,361.1 870.7,361.1 C872.3,360.5 873.7,355.9 875.3,355.9 C876.9,355.9 877.4,360.2 878.7,361.1 C880.1,361.1 880.6,361.1 882.2,360.5 C883.8,358.9 884.9,354.3 886.7,353.6 C888.5,353.6 889.5,355.9 891.3,357.0 C893.1,358.2 894.0,358.6 895.9,359.3 C897.7,360.0 898.6,360.0 900.4,360.5 C902.3,360.9 903.4,361.6 905.0,361.6 C906.6,360.9 906.8,357.5 908.4,357.0 C910.0,357.0 911.4,358.4 913.0,359.3 C914.6,360.2 914.8,361.1 916.4,361.6 C918.0,361.6 919.6,361.6 921.0,361.6 C922.3,361.6 921.7,361.6 923.3,361.6 C924.9,361.8 927.4,362.7 929.0,362.7 C930.6,362.7 930.1,361.6 931.3,361.6 C932.4,361.6 933.1,362.7 934.7,362.7 C936.3,361.6 937.7,357.5 939.2,355.9 C940.8,354.7 941.1,355.0 942.7,354.7 C944.3,354.7 945.9,354.7 947.2,354.7 C948.6,353.6 948.4,350.4 949.5,349.0 C950.7,347.9 951.1,348.0 953.0,347.9 C954.8,347.9 956.9,347.9 958.7,348.6 C960.4,350.6 960.5,357.2 961.6,358.2 C962.8,358.2 963.1,354.4 964.4,353.6 C965.6,353.6 966.1,353.6 967.8,354.3 C969.5,355.4 972.0,358.3 973.1,359.3" fill="none" stroke="#8fca7a" stroke-width="1" stroke-linejoin="round"/>
  <path d="M748.5,357.3 Q752,351.5 755,357.6 Z" fill="#8fca7a"/>
  <path d="M922,362.5 Q922.3,351 925.5,351.5 Q929.5,351 930.5,362 Q927,367 922,362.5 Z" fill="#8fca7a"/>
  <path d="M706,360 Q710,357 713.5,361.5 Q712,366 706,360Z" fill="#8fca7a"/>
  <!-- legend -->
  <path d="M639.2 420.2 H660.2" stroke="#5470c6" stroke-width="1.6"/><circle cx="649.7" cy="420.2" r="4.8" fill="#5470c6"/>
  <path d="M714.5 420.2 H735.5" stroke="#91cc75" stroke-width="1.6"/><circle cx="725" cy="420.2" r="4.8" fill="#91cc75"/>
  <!-- slider -->
  <rect x="518.1" y="434.9" width="457.4" height="12.3" fill="#dde4f9"/>
  <rect x="518.1" y="429.3" width="457.4" height="5.7" fill="#b5bfe3"/>
  <path d="M518.1 446.2 L560 446 L620 445.8 L700 445.5 L760 445 L775 443.5 L787 442.5 L796 443 L802 439.5 L811 436.8 L818 438.5 L824 442.5 L830 445.2 L850 445.4 L975.5 445.4 L975.5 447.2 L518.1 447.2 Z" fill="#c5cef0"/>
  <rect x="517.4" y="437.6" width="2.6" height="7.6" rx="1.2" fill="#fff" stroke="#b5bfe3" stroke-width=".5"/>
  <rect x="973.8" y="437.6" width="2.6" height="7.6" rx="1.2" fill="#fff" stroke="#b5bfe3" stroke-width=".5"/>
  <path d="M744.2 431.4 V432.6 M745.7 431.4 V432.6 M747.2 431.4 V432.6 M748.7 431.4 V432.6" stroke="#fff" stroke-width=".7"/>

  <!-- donut -->
  <path d="M1146.60,240.50 A95.9,95.9 0 1 1 1117.18,245.12 L1125.80,271.87 A67.8,67.8 0 1 0 1146.60,268.60 Z" fill="#0f75bc"/>
<path d="M1117.18,245.12 A95.9,95.9 0 0 1 1136.46,241.04 L1139.43,268.98 A67.8,67.8 0 0 0 1125.80,271.87 Z" fill="#1b4e85"/>
<path d="M1136.46,241.04 A95.9,95.9 0 0 1 1141.98,240.61 L1143.33,268.68 A67.8,67.8 0 0 0 1139.43,268.98 Z" fill="#5a8fce"/>
<path d="M1141.98,240.61 A95.9,95.9 0 0 1 1146.60,240.50 L1146.60,268.60 A67.8,67.8 0 0 0 1143.33,268.68 Z" fill="#8db4e0"/>
  <path d="M1290.7 224 V448.5" stroke="#dde0e7" stroke-width="1"/>
  <!-- h bars -->
  <rect x="1378.8" y="249.4" width="138" height="19.1" rx="1" fill="#1077c1"/>
  <rect x="1378.8" y="296.9" width="4.7" height="19.3" rx="1" fill="#1077c1"/>
  <rect x="1378.5" y="345" width="1.6" height="19.1" rx=".6" fill="#1077c1"/>
  <rect x="1378.5" y="393.1" width="1.5" height="19.1" rx=".6" fill="#1077c1"/>

  <!-- waterfall -->
  <g stroke="#e8ebf0" stroke-width="1">
    <path d="M501.7 553 H782.5 M501.7 574.5 H782.5 M501.7 597 H782.5 M501.7 619 H782.5"/>
  </g>
  <path d="M501.7 641.3 H782.5" stroke="#dfe3ea" stroke-width="1"/>
  <rect x="530.2" y="557.8" width="37.3" height="83.1" fill="#1077c1"/>
  <rect x="623.3" y="553" width="37.6" height="4.8" fill="#1077c1"/>
  <rect x="716.9" y="553" width="37.3" height="87.9" fill="#003a5c"/>
  <rect x="517.9" y="541.4" width="41.6" height="10.6" rx="5.3" fill="#dcfce7"/>
  <rect x="704.3" y="536.3" width="41.4" height="10.5" rx="5.2" fill="#dcfce7"/>
  <g font-family="Liberation Sans, sans-serif" font-size="9.3" font-weight="700" fill="#4b4b4b" text-anchor="end">
    <text transform="translate(550.6,649.2) rotate(-45)" textLength="40.2" lengthAdjust="spacingAndGlyphs">Renta Fija</text>
    <text transform="translate(644.2,649.2) rotate(-45)" textLength="60.3" lengthAdjust="spacingAndGlyphs">Renta Variable</text>
    <text transform="translate(737.4,648.6) rotate(-45)" textLength="20.6" lengthAdjust="spacingAndGlyphs">Total</text>
  </g>
  <!-- table -->
  <path d="M832.4 549.5 H1559.3 M832.4 580.5 H1559.3" stroke="#e1e5eb" stroke-width="1"/>
  <path d="M844.2 562.2 L847.2 565 L844.2 567.8 M844.2 593.1 L847.2 595.9 L844.2 598.7" fill="none" stroke="#5a5a5a" stroke-width="1.3" stroke-linecap="round" stroke-linejoin="round"/>
  <rect x="842" y="738" width="702.5" height="5.2" rx="2.6" fill="#97999e"/>
  <path d="M834.3 740.6 L838.3 737.8 V743.4 Z M1557 740.6 L1553 737.8 V743.4 Z" fill="#97999e"/>
</svg>
<div class="t" style="left:465.55px;top:226px;font-size:9.8px;color:#636363;transform:scaleX(1.0094);transform-origin:0 0;">$800.00M</div>
<div class="t" style="left:465.55px;top:264px;font-size:9.8px;color:#636363;transform:scaleX(1.0094);transform-origin:0 0;">$600.00M</div>
<div class="t" style="left:465.55px;top:302px;font-size:9.8px;color:#636363;transform:scaleX(1.0094);transform-origin:0 0;">$400.00M</div>
<div class="t" style="left:465.55px;top:339px;font-size:9.8px;color:#636363;transform:scaleX(1.0094);transform-origin:0 0;">$200.00M</div>
<div class="t" style="left:485.56px;top:377px;font-size:9.8px;color:#636363;transform:scaleX(0.9625);transform-origin:0 0;">$0.00</div>
<div class="t" style="left:489.68px;top:388px;font-size:9.8px;color:#636363;transform:scaleX(1.0303);transform-origin:0 0;">01-07-2024</div>
<div class="t" style="left:557.18px;top:388px;font-size:9.8px;color:#636363;transform:scaleX(1.0303);transform-origin:0 0;">25-07-2024</div>
<div class="t" style="left:624.78px;top:388px;font-size:9.8px;color:#636363;transform:scaleX(1.0303);transform-origin:0 0;">26-08-2024</div>
<div class="t" style="left:692.22px;top:388px;font-size:9.8px;color:#636363;transform:scaleX(1.0355);transform-origin:0 0;">19-09-2024</div>
<div class="t" style="left:759.52px;top:388px;font-size:9.8px;color:#636363;transform:scaleX(1.0355);transform-origin:0 0;">16-10-2024</div>
<div class="t" style="left:827.11px;top:388px;font-size:9.8px;color:#636363;transform:scaleX(1.0515);transform-origin:0 0;">12-11-2024</div>
<div class="t" style="left:894.58px;top:388px;font-size:9.8px;color:#636363;transform:scaleX(1.0303);transform-origin:0 0;">08-12-2024</div>
<div class="t" style="left:664.08px;top:414px;font-size:9.8px;color:#444;transform:scaleX(0.9614);transform-origin:0 0;">Renta Fija</div>
<div class="t" style="left:739.26px;top:414px;font-size:9.8px;color:#444;transform:scaleX(0.9889);transform-origin:0 0;">Renta Variable</div>
<div class="t" style="left:1022.76px;top:196px;font-size:12.2px;color:#111;font-weight:700;transform:scaleX(0.9749);transform-origin:0 0;">VaR Componental por Subclase</div>
<svg style="left:1423px;top:185px" width="138" height="34" viewBox="1423 185 138 34"><rect x="1426.3" y="187.8" width="131.4" height="28.1" rx="6" fill="#fff" stroke="#e2e5ea" stroke-width="1"/></svg>
<div class="t" style="left:1436.09px;top:197px;font-size:11.8px;color:#1f2937;-webkit-text-stroke:0.15px #1f2937;transform:scaleX(0.9800);transform-origin:0 0;">Subclase</div>
<svg style="left:1537.6px;top:197.5px" width="10" height="10" viewBox="0 0 10 10"><path d="M2.3 3.5 L5 6.1 L7.7 3.5" fill="none" stroke="#222" stroke-width="1.5" stroke-linecap="round" stroke-linejoin="round"/></svg>
<div class="t" style="left:1313.57px;top:254px;font-size:8.7px;color:#505050;font-weight:700;transform:scaleX(0.9222);transform-origin:0 0;">Gubernamental</div>
<div class="t" style="left:1327.07px;top:301px;font-size:8.7px;color:#505050;font-weight:700;transform:scaleX(0.9149);transform-origin:0 0;">Corporativo</div>
<div class="t" style="left:1338.88px;top:350px;font-size:8.7px;color:#505050;font-weight:700;transform:scaleX(0.8632);transform-origin:0 0;">Acciones</div>
<div class="t" style="left:1344.25px;top:398px;font-size:8.7px;color:#505050;font-weight:700;transform:scaleX(0.8918);transform-origin:0 0;">Fondos</div>
<div class="a" style="left:1500px;top:240px;width:59.4px;height:40px;overflow:hidden">
<div class="t" style="left:21.26px;top:13px;font-size:9.9px;color:#333;transform:scaleX(0.9586);transform-origin:0 0;">$115.74M</div>
</div>
<div class="t" style="left:1387.97px;top:301px;font-size:9.9px;color:#333;transform:scaleX(0.9094);transform-origin:0 0;">$3.99M</div>
<div class="t" style="left:1384.37px;top:349px;font-size:9.9px;color:#333;transform:scaleX(0.9187);transform-origin:0 0;">$1.12M</div>
<div class="t" style="left:1384.38px;top:397px;font-size:9.9px;color:#333;transform:scaleX(0.8845);transform-origin:0 0;">$933.82k</div>
<div class="t" style="left:451.91px;top:492px;font-size:12.2px;color:#111;font-weight:700;transform:scaleX(0.9710);transform-origin:0 0;">Cambio en VaR por Clase</div>
<svg style="left:663px;top:481px" width="138" height="34" viewBox="663 481 138 34"><rect x="666.1" y="483.5" width="131.6" height="28.2" rx="6" fill="#fff" stroke="#e2e5ea" stroke-width="1"/></svg>
<div class="t" style="left:675.90px;top:493px;font-size:11.8px;color:#1f2937;-webkit-text-stroke:0.15px #1f2937;transform:scaleX(0.9521);transform-origin:0 0;">Clase</div>
<svg style="left:777px;top:493px" width="10" height="10" viewBox="0 0 10 10"><path d="M2.3 3.5 L5 6.1 L7.7 3.5" fill="none" stroke="#222" stroke-width="1.5" stroke-linecap="round" stroke-linejoin="round"/></svg>
<div class="t" style="left:468.00px;top:548px;font-size:8px;color:#606060;transform:scaleX(0.8885);transform-origin:0 0;">$40.00M</div>
<div class="t" style="left:468.00px;top:571px;font-size:8px;color:#606060;transform:scaleX(0.8885);transform-origin:0 0;">$30.00M</div>
<div class="t" style="left:468.00px;top:593px;font-size:8px;color:#606060;transform:scaleX(0.8885);transform-origin:0 0;">$20.00M</div>
<div class="t" style="left:468.00px;top:615px;font-size:8px;color:#606060;transform:scaleX(0.8885);transform-origin:0 0;">$10.00M</div>
<div class="t" style="left:478.50px;top:637px;font-size:8px;color:#606060;transform:scaleX(0.8405);transform-origin:0 0;">$0.00</div>
<div class="t" style="left:626.90px;top:535px;font-size:10.5px;color:#333;transform:scaleX(0.9714);transform-origin:0 0;">—</div>
<div class="t" style="left:523.79px;top:542px;font-size:8.6px;color:#16a34a;transform:scaleX(1.0175);transform-origin:0 0;">+46.0%</div>
<div class="t" style="left:710.29px;top:537px;font-size:8.6px;color:#16a34a;transform:scaleX(1.0175);transform-origin:0 0;">+48.5%</div>
<div class="t" style="left:452.97px;top:723px;font-size:11.6px;color:#7a8290;-webkit-text-stroke:0.2px #7a8290;transform:scaleX(0.9328);transform-origin:0 0;">Temporalidad</div>
<svg style="left:523px;top:713px" width="153" height="34" viewBox="523 713 153 34"><rect x="525.5" y="715.9" width="147.2" height="27.9" rx="6" fill="#fff" stroke="#e2e5ea" stroke-width="1"/></svg>
<div class="t" style="left:535.28px;top:725px;font-size:11.8px;color:#1f2937;-webkit-text-stroke:0.15px #1f2937;transform:scaleX(0.9904);transform-origin:0 0;">Year-To-Date</div>
<svg style="left:652.6px;top:725.2px" width="10" height="10" viewBox="0 0 10 10"><path d="M2.3 3.5 L5 6.1 L7.7 3.5" fill="none" stroke="#222" stroke-width="1.5" stroke-linecap="round" stroke-linejoin="round"/></svg>
<div class="t" style="left:831.67px;top:485px;font-size:12.2px;color:#111;font-weight:700;transform:scaleX(0.9743);transform-origin:0 0;">Descomposición del VaR Global</div>
<div class="t" style="left:852.01px;top:522px;font-size:12.4px;color:#111;font-weight:700;transform:scaleX(0.9844);transform-origin:0 0;">Clase/Subclase</div>
<div class="t" style="left:959.70px;top:515px;font-size:12.4px;color:#111;font-weight:700;transform:scaleX(0.9840);transform-origin:0 0;">Valor Mercado</div>
<div class="t" style="left:959.82px;top:528px;font-size:12.4px;color:#111;font-weight:700;transform:scaleX(0.9588);transform-origin:0 0;">(DOP)</div>
<div class="t" style="left:1080.10px;top:522px;font-size:12.4px;color:#111;font-weight:700;transform:scaleX(0.9502);transform-origin:0 0;">VaR (DOP)</div>
<div class="t" style="left:1200.20px;top:522px;font-size:12.4px;color:#111;font-weight:700;transform:scaleX(0.9547);transform-origin:0 0;">VaR (USD)</div>
<div class="t" style="left:1320.60px;top:522px;font-size:12.4px;color:#111;font-weight:700;transform:scaleX(0.9572);transform-origin:0 0;">VaR Total (DOP)</div>
<div class="t" style="left:1441.00px;top:522px;font-size:12.4px;color:#111;font-weight:700;transform:scaleX(0.9573);transform-origin:0 0;">VaR %</div>
<div class="t" style="left:851.63px;top:560px;font-size:11.1px;color:#222;-webkit-text-stroke:0.12px #222;transform:scaleX(0.9329);transform-origin:0 0;">Renta Fija</div>
<div class="t" style="left:959.52px;top:560px;font-size:11.1px;color:#222;-webkit-text-stroke:0.12px #222;transform:scaleX(0.9587);transform-origin:0 0;">$23,653.18M</div>
<div class="t" style="left:1079.91px;top:560px;font-size:11.1px;color:#222;-webkit-text-stroke:0.12px #222;transform:scaleX(1.0162);transform-origin:0 0;">$28.45M</div>
<div class="t" style="left:1200.01px;top:560px;font-size:11.1px;color:#222;-webkit-text-stroke:0.12px #222;transform:scaleX(0.9805);transform-origin:0 0;">$91.29M</div>
<div class="t" style="left:1320.43px;top:560px;font-size:11.1px;color:#222;-webkit-text-stroke:0.12px #222;transform:scaleX(0.9266);transform-origin:0 0;">$119.73M</div>
<div class="t" style="left:1440.19px;top:560px;font-size:11.1px;color:#222;-webkit-text-stroke:0.12px #222;transform:scaleX(0.9305);transform-origin:0 0;">0.51%</div>
<div class="t" style="left:851.59px;top:590px;font-size:11.1px;color:#222;-webkit-text-stroke:0.12px #222;transform:scaleX(0.9687);transform-origin:0 0;">Renta Variable</div>
<div class="t" style="left:959.51px;top:590px;font-size:11.1px;color:#222;-webkit-text-stroke:0.12px #222;transform:scaleX(1.0068);transform-origin:0 0;">$565.80M</div>
<div class="t" style="left:1079.91px;top:590px;font-size:11.1px;color:#222;-webkit-text-stroke:0.12px #222;transform:scaleX(1.0120);transform-origin:0 0;">$2.06M</div>
<div class="t" style="left:1200.00px;top:590px;font-size:11.1px;color:#222;-webkit-text-stroke:0.12px #222;transform:scaleX(1.0252);transform-origin:0 0;">$0.00</div>
<div class="t" style="left:1320.40px;top:590px;font-size:11.1px;color:#222;-webkit-text-stroke:0.12px #222;transform:scaleX(1.0260);transform-origin:0 0;">$2.06M</div>
<div class="t" style="left:1440.16px;top:590px;font-size:11.1px;color:#222;-webkit-text-stroke:0.12px #222;transform:scaleX(1.0092);transform-origin:0 0;">0.36%</div>
</body>
</html>
